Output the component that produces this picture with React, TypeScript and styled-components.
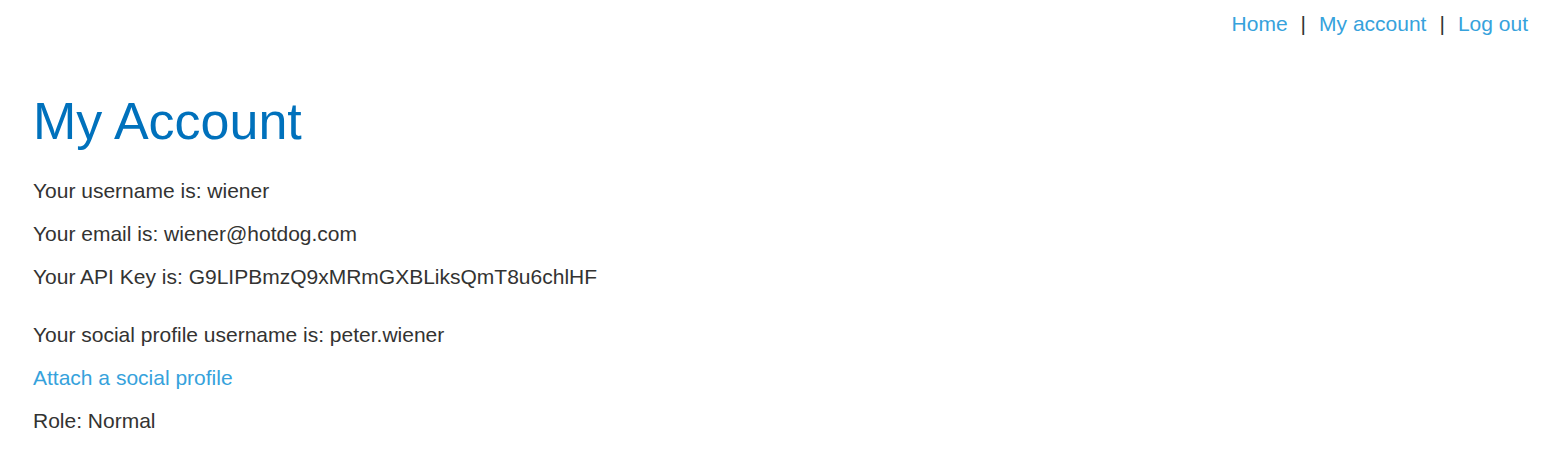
import React from 'react'
import styled, { createGlobalStyle } from 'styled-components'

const GlobalStyle = createGlobalStyle`
  html, body {
    margin: 0;
    padding: 0;
    background: #ffffff;
  }

  body {
    font-family: 'Liberation Sans', Arial, sans-serif;
    color: #333332;
  }
`

const Page = styled.div`
  padding: 0 33px;
`

const TopNav = styled.nav`
  display: flex;
  justify-content: flex-end;
  align-items: center;
  gap: 13px;
  padding: 12px 24px 0 0;
  margin-right: -33px;
  font-size: 21px;
  line-height: 24px;
`

const NavLink = styled.a`
  color: #36a2dc;
  text-decoration: none;
`

const Pipe = styled.span`
  color: #333332;
`

const Title = styled.h1`
  margin: 55px 0 25px;
  font-size: 52px;
  font-weight: normal;
  line-height: 60px;
  color: #0071bc;
`

const InfoList = styled.div`
  display: flex;
  flex-direction: column;
  gap: 14px;
`

const Info = styled.p<{ $gapTop?: number }>`
  margin: ${(p) => p.$gapTop ?? 0}px 0 0;
  font-size: 21px;
  line-height: 29px;
`

const InfoLink = styled.a`
  color: #36a2dc;
  text-decoration: none;
`

const App = () => {
  return (
    <>
      <GlobalStyle />
      <Page>
        <TopNav>
          <NavLink href="#">Home</NavLink>
          <Pipe>|</Pipe>
          <NavLink href="#">My account</NavLink>
          <Pipe>|</Pipe>
          <NavLink href="#">Log out</NavLink>
        </TopNav>

        <Title>My Account</Title>

        <InfoList>
          <Info>Your username is: wiener</Info>
          <Info>Your email is: wiener@hotdog.com</Info>
          <Info>Your API Key is: G9LIPBmzQ9xMRmGXBLiksQmT8u6chlHF</Info>
          <Info $gapTop={15}>Your social profile username is: peter.wiener</Info>
          <Info>
            <InfoLink href="#">Attach a social profile</InfoLink>
          </Info>
          <Info>Role: Normal</Info>
        </InfoList>
      </Page>
    </>
  )
}

export default App
